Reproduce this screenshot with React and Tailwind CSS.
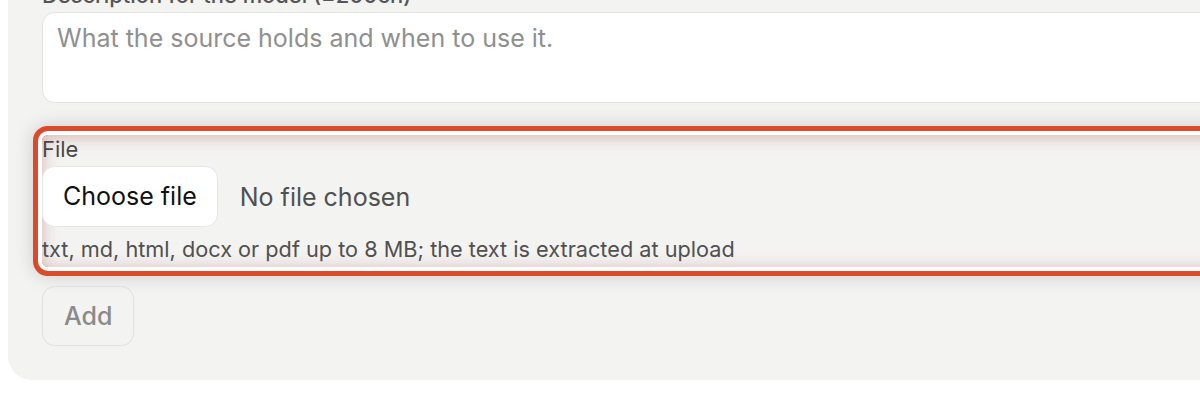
const FileField = () => (
  <div className="rounded-[6px] pt-px pb-[3px] shadow-[inset_0_2px_16px_rgba(170,90,80,0.4),0_0_0_4px_#ffffff,0_0_0_9px_#dc4a2c,0_0_18px_10px_rgba(0,0,0,0.14)]">
    <div className="text-[21.9px] leading-[27px] text-[#484848]">File</div>
    <div className="mt-[3px] flex items-center gap-[22px]">
      <button className="rounded-[12.5px] border border-[#e6e6e4] bg-white px-[20px] pt-[11px] pb-[10px] text-[25px] leading-[37.5px] text-[#111]">
        Choose file
      </button>
      <span className="pt-[2px] text-[25px] text-[#505050]">No file chosen</span>
    </div>
    <div className="mt-[7px] text-[21.7px] leading-[30px] text-[#505050]">
      txt, md, html, docx or pdf up to 8 MB; the text is extracted at upload
    </div>
  </div>
);

export default function App() {
  return (
    <div className="h-[400px] overflow-hidden bg-white font-['Inter',sans-serif]">
      <div className="-mt-[21px] ml-2 w-[1240px] rounded-b-[24px] bg-[#f3f3f2] pb-[34px] pl-[34px]">
        <div className="text-[21.9px] font-medium leading-[32px] text-[#555]">
          Description for the model (≤200ch)
        </div>
        <textarea
          rows={2}
          placeholder="What the source holds and when to use it."
          className="mt-px block h-[91px] w-full resize-none rounded-[12.5px] border border-[#e2e2e0] bg-white px-[14px] pt-[6px] text-[25px] leading-[38px] text-[#222] placeholder:text-[#8f8f8f] outline-none"
        />
        <div className="mt-[32px]">
          <FileField />
        </div>
        <button
          disabled
          className="mt-[19px] rounded-[12.5px] border border-[#e0e0de] px-[21px] pt-[11px] pb-[10px] text-[25px] font-medium leading-[37.5px] text-[#8a8a8a]"
        >
          Add
        </button>
      </div>
    </div>
  );
}
